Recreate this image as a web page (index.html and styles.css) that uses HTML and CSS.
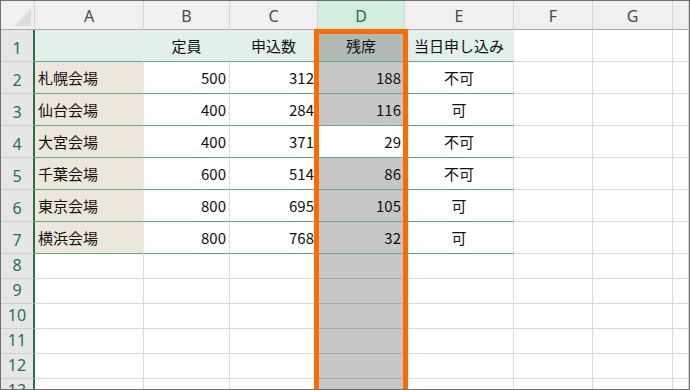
FILE: index.html
```html
<!DOCTYPE html>
<html lang="ja">
<head>
    <meta charset="UTF-8">
    <meta name="viewport" content="width=device-width, initial-scale=1.0">
    <title>残席</title>
    <link rel="stylesheet" href="styles.css">
</head>
<body>
    <div class="sheet">
        <div class="row head">
            <div class="corner"></div>
            <div class="ch">A</div>
            <div class="ch">B</div>
            <div class="ch">C</div>
            <div class="ch sel">D</div>
            <div class="ch">E</div>
            <div class="ch">F</div>
            <div class="ch">G</div>
            <div class="ch"></div>
        </div>

        <div class="row tall">
            <div class="rh">1</div>
            <div class="c t hd"></div>
            <div class="c t hd mid">定員</div>
            <div class="c t hd mid">申込数</div>
            <div class="c t hd pick mid">残席</div>
            <div class="c t hd mid">当日申し込み</div>
            <div class="c"></div>
            <div class="c"></div>
            <div class="c"></div>
        </div>
        <div class="row tall">
            <div class="rh">2</div>
            <div class="c t nm">札幌会場</div>
            <div class="c t num">500</div>
            <div class="c t num">312</div>
            <div class="c t gray num">188</div>
            <div class="c t mid">不可</div>
            <div class="c"></div>
            <div class="c"></div>
            <div class="c"></div>
        </div>
        <div class="row tall">
            <div class="rh">3</div>
            <div class="c t nm">仙台会場</div>
            <div class="c t num">400</div>
            <div class="c t num">284</div>
            <div class="c t gray num">116</div>
            <div class="c t mid">可</div>
            <div class="c"></div>
            <div class="c"></div>
            <div class="c"></div>
        </div>
        <div class="row tall">
            <div class="rh">4</div>
            <div class="c t nm">大宮会場</div>
            <div class="c t num">400</div>
            <div class="c t num">371</div>
            <div class="c t num">29</div>
            <div class="c t mid">不可</div>
            <div class="c"></div>
            <div class="c"></div>
            <div class="c"></div>
        </div>
        <div class="row tall">
            <div class="rh">5</div>
            <div class="c t nm">千葉会場</div>
            <div class="c t num">600</div>
            <div class="c t num">514</div>
            <div class="c t gray num">86</div>
            <div class="c t mid">不可</div>
            <div class="c"></div>
            <div class="c"></div>
            <div class="c"></div>
        </div>
        <div class="row tall">
            <div class="rh">6</div>
            <div class="c t nm">東京会場</div>
            <div class="c t num">800</div>
            <div class="c t num">695</div>
            <div class="c t gray num">105</div>
            <div class="c t mid">可</div>
            <div class="c"></div>
            <div class="c"></div>
            <div class="c"></div>
        </div>
        <div class="row tall">
            <div class="rh">7</div>
            <div class="c t nm">横浜会場</div>
            <div class="c t num">800</div>
            <div class="c t num">768</div>
            <div class="c t gray num">32</div>
            <div class="c t mid">可</div>
            <div class="c"></div>
            <div class="c"></div>
            <div class="c"></div>
        </div>

        <div class="row">
            <div class="rh">8</div>
            <div class="c"></div><div class="c"></div><div class="c"></div>
            <div class="c gray"></div>
            <div class="c"></div><div class="c"></div><div class="c"></div><div class="c"></div>
        </div>
        <div class="row">
            <div class="rh">9</div>
            <div class="c"></div><div class="c"></div><div class="c"></div>
            <div class="c gray"></div>
            <div class="c"></div><div class="c"></div><div class="c"></div><div class="c"></div>
        </div>
        <div class="row">
            <div class="rh">10</div>
            <div class="c"></div><div class="c"></div><div class="c"></div>
            <div class="c gray"></div>
            <div class="c"></div><div class="c"></div><div class="c"></div><div class="c"></div>
        </div>
        <div class="row">
            <div class="rh">11</div>
            <div class="c"></div><div class="c"></div><div class="c"></div>
            <div class="c gray"></div>
            <div class="c"></div><div class="c"></div><div class="c"></div><div class="c"></div>
        </div>
        <div class="row">
            <div class="rh">12</div>
            <div class="c"></div><div class="c"></div><div class="c"></div>
            <div class="c gray"></div>
            <div class="c"></div><div class="c"></div><div class="c"></div><div class="c"></div>
        </div>
        <div class="row">
            <div class="rh">13</div>
            <div class="c"></div><div class="c"></div><div class="c"></div>
            <div class="c gray"></div>
            <div class="c"></div><div class="c"></div><div class="c"></div><div class="c"></div>
        </div>

        <!-- orange frame around column D -->
        <div class="frame"></div>
    </div>
</body>
</html>
```

FILE: styles.css
```css
body {
  margin: 0;
  font-family: "Noto Sans CJK JP", "Noto Sans", sans-serif;
}

.sheet {
  position: relative;
  width: 690px;
  height: 390px;
  box-sizing: border-box;
  border: 1px solid #6e6e6e;
  overflow: hidden;
  background: #fff;
}

.row {
  display: grid;
  grid-template-columns: 34px 109px 86px 88px 87px 109px 79px 80px 1fr;
  height: 25px;
}

.row.head {
  height: 29px;
}

.row.tall {
  height: 32px;
}

.row > div {
  box-sizing: border-box;
  display: flex;
  align-items: center;
  font-size: 15px;
  color: #111;
  white-space: nowrap;
}

/* column headers */
.corner {
  position: relative;
  background: #f0f0f0;
  border-right: 1px solid #d6d6d6;
  border-bottom: 1px solid #ababab;
}

.corner::after {
  content: "";
  position: absolute;
  right: 3px;
  bottom: 3px;
  border-left: 17px solid transparent;
  border-bottom: 17px solid #dcdcdc;
}

.ch {
  justify-content: center;
  background: #f0f0f0;
  border-right: 1px solid #d6d6d6;
  border-bottom: 1px solid #ababab;
  font-family: "Noto Sans", sans-serif;
  font-size: 16px !important;
  color: #4a4a4a !important;
  padding-top: 2px;
}

.ch.sel {
  background: #d3eedf;
  color: #1e6b45 !important;
}

/* row headers */
.rh {
  justify-content: center;
  align-items: flex-end !important;
  padding-bottom: 3px;
  background: #e6e6e6;
  border-right: 2px solid #217346;
  border-bottom: 1px solid #cdcdcd;
  font-family: "Noto Sans", sans-serif;
  font-size: 16px !important;
  line-height: 20px;
  color: #227250 !important;
}

/* cells */
.c {
  border-right: 1px solid #dadada;
  border-bottom: 1px solid #dadada;
}

.c.t {
  border-bottom-color: #61aa88;
}

.hd {
  background: #e2efea;
  border-right-color: transparent !important;
}

.nm {
  background: #ede6dc;
  border-right-color: transparent !important;
  padding-left: 3px;
}

.num {
  justify-content: flex-end;
  padding-right: 3px;
}

.mid {
  justify-content: center;
}

.gray {
  background: #c6c6c6;
}

.c.gray:not(.t) {
  border-bottom-color: #a9a9a9;
}

.pick {
  background: #b2bab6;
}

.frame {
  position: absolute;
  left: 313px;
  top: 28px;
  width: 94px;
  height: 400px;
  box-sizing: border-box;
  border: 5px solid #ff6a00;
}
```
